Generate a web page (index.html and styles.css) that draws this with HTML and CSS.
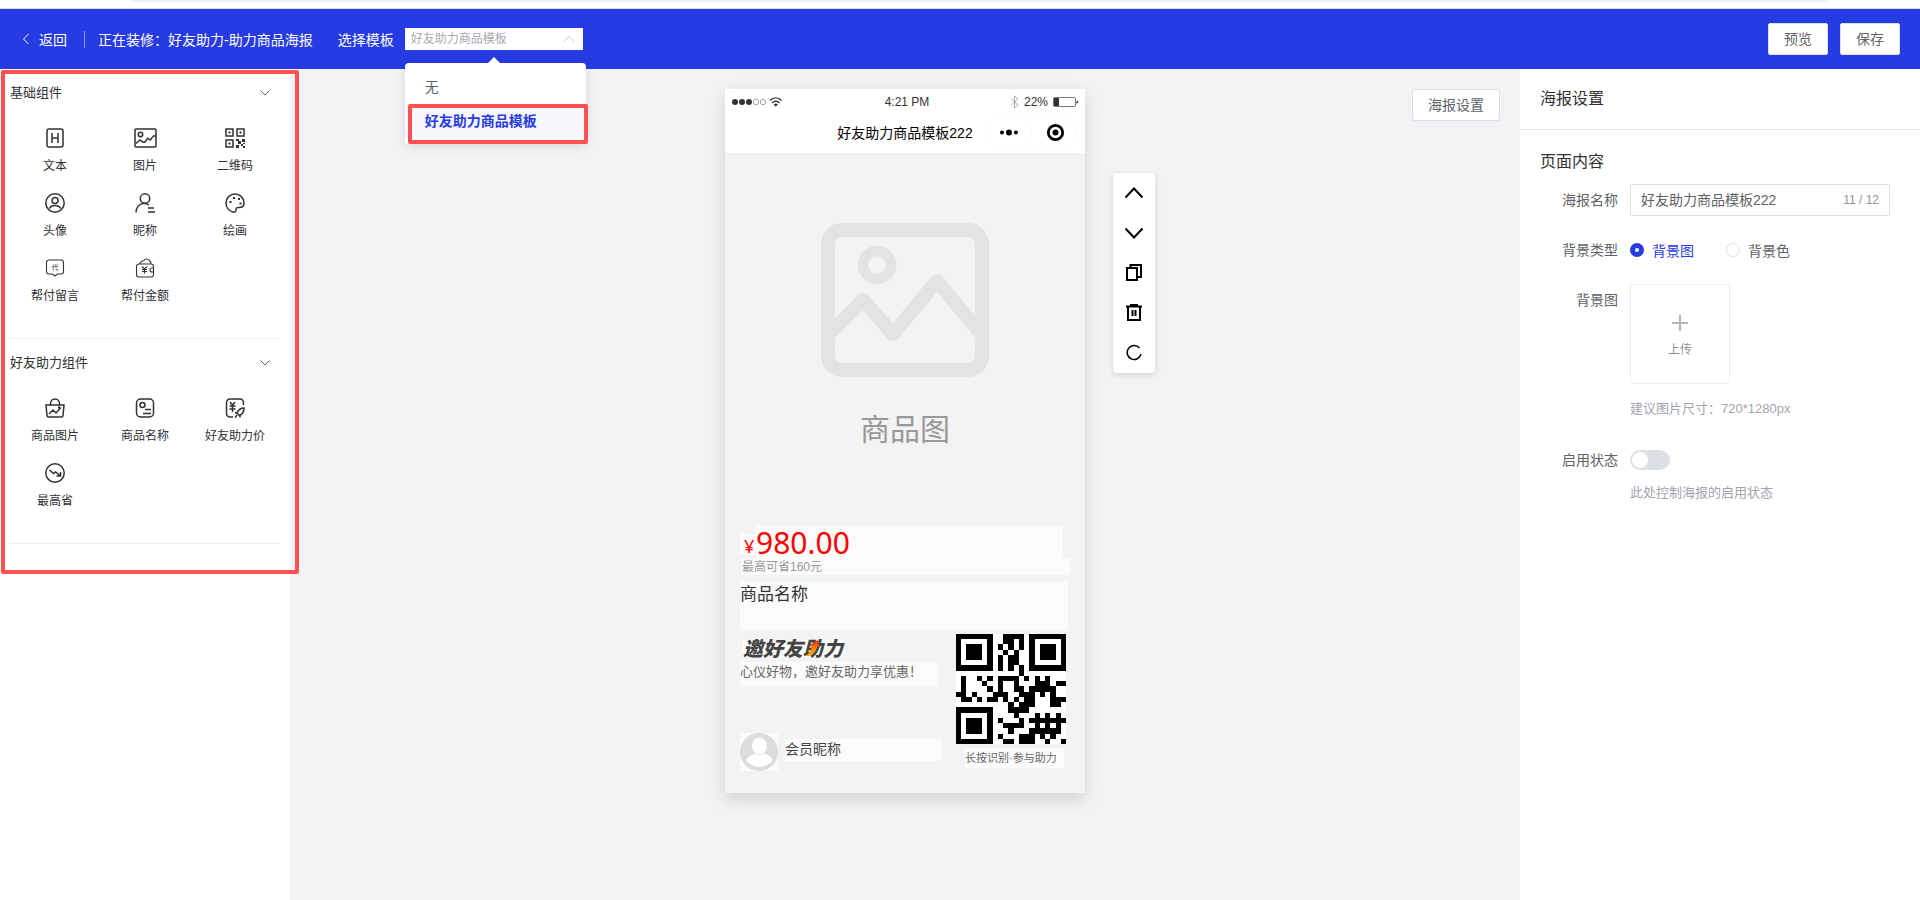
FILE: index.html
```html
<!DOCTYPE html>
<html lang="zh-CN">
<head>
  <meta charset="UTF-8">
  <meta name="viewport" content="width=device-width, initial-scale=1.0">
  <title>好友助力-助力商品海报</title>
  <link rel="stylesheet" href="styles.css">
</head>
<body>
  <div class="browser-strip"><div class="address-pill"></div></div>

  <header class="topbar">
    <a class="back" href="#">
      <svg width="8" height="12" viewBox="0 0 8 12"><path d="M6.500 1L1.500 6l5 5"/></svg>
      返回
    </a>
    <span class="divider"></span>
    <span class="editing">正在装修：好友助力-助力商品海报</span>
    <label for="template">选择模板</label>
    <div class="select-wrap">
      <select id="template">
        <option>好友助力商品模板</option>
      </select>
      <svg class="select-arrow" width="12" height="8" viewBox="0 0 12 8"><path d="M1 6.500l5-5 5 5"/></svg>
      <ul class="dropdown">
        <li>无</li>
        <li class="selected">好友助力商品模板<span class="mark mark-option"></span></li>
      </ul>
    </div>
    <div class="topbar-actions">
      <button type="button" class="btn">预览</button>
      <button type="button" class="btn">保存</button>
    </div>
  </header>

  <div class="layout">
    <aside class="sidebar">
      <div class="groups">
        <section class="group">
          <h2>基础组件 <svg width="10" height="6" viewBox="0 0 10 6"><path d="M.5.5L5 5 9.500.5"/></svg></h2>
          <ul class="widgets">
            <li>
              <svg viewBox="0 0 20 20"><rect x="2" y="1" width="16" height="18" rx="2"/><path d="M7 5v10M13 5v10M7 10h6"/></svg>
              文本
            </li>
            <li>
              <svg class="wide" viewBox="0 0 23 20"><rect x="1" y="1" width="21" height="18" rx="1"/><circle cx="6.500" cy="6.500" r="2.200"/><path d="M2 15.500l4-3.500 3 2c2 1 3-1 4-3s2 1 3 1 2-3 3.500-4L22 8"/></svg>
              图片
            </li>
            <li>
              <svg viewBox="0 0 20 20"><path d="M1 1h7v7H1zM12 1h7v7h-7zM1 12h7v7H1z"/><path class="solid" d="M3.500 3.500h2v2h-2zM14.500 3.500h2v2h-2zM3.500 14.500h2v2h-2zM11 11h3v2h-3zM13 13h3v3h-3zM17 11h3v3h-3zM11 17h3v3h-3zM16 16h2v2h-2zM18 18h2v2h-2zM18 15h2v1h-2z"/></svg>
              二维码
            </li>
            <li>
              <svg viewBox="0 0 20 20"><circle cx="10" cy="10" r="9.200"/><circle cx="10" cy="7.500" r="3"/><path d="M4.500 15.500c1-2.500 3-3 5.500-3s4.500.5 5.500 3"/></svg>
              头像
            </li>
            <li>
              <svg viewBox="0 0 20 20"><circle cx="10" cy="5.500" r="4.700"/><path d="M1 19.500c0-5 3-9 8-9 2 0 3.500.5 5 1.500M13 15h6M13 19h7"/></svg>
              昵称
            </li>
            <li>
              <svg viewBox="0 0 20 20"><path d="M8 19C3.500 18 1 14 1 10a9 9 0 0 1 18 0c0 3-2 4.500-5 4.500-3 0-3 .5-3 2.500 0 1.500-1 2.500-3 2z"/><path class="solid" d="M4.500 8h2v2h-2zM8 4h2v2H8zM13 5h2v2h-2zM14.500 9.500h2v2h-2z"/></svg>
              绘画
            </li>
            <li>
              <svg class="thin" viewBox="0 0 20 20"><path d="M4 2h12a2.500 2.500 0 0 1 2.500 2.500v9A2.500 2.500 0 0 1 16 16h-3.500L10 18l-2.500-2H4a2.500 2.500 0 0 1-2.500-2.500v-9A2.500 2.500 0 0 1 4 2z"/><text x="6.500" y="12">代</text></svg>
              帮付留言
            </li>
            <li>
              <svg class="thin" viewBox="0 0 20 20"><path d="M4 6h12a2.500 2.500 0 0 1 2.500 2.500v8A2.500 2.500 0 0 1 16 19H4a2.500 2.500 0 0 1-2.500-2.500v-8A2.500 2.500 0 0 1 4 6zM4.500 6c1-3 3-3 4.500-3.500 1-2 4-2 5.500 0 1 1 1.500 2 1.500 3.500M18.500 10H17a2 2 0 0 0 0 4h1.500"/><path d="M7 8.500L9.500 11 12 8.500M9.500 11v4.500M7 11.500h5M7 13.500h5"/></svg>
              帮付金额
            </li>
          </ul>
        </section>

        <section class="group">
          <h2>好友助力组件 <svg width="10" height="6" viewBox="0 0 10 6"><path d="M.5.5L5 5 9.500.5"/></svg></h2>
          <ul class="widgets">
            <li>
              <svg viewBox="0 0 20 20"><path d="M1 7h18l-1 10.500a1.500 1.500 0 0 1-1.500 1.500h-13A1.500 1.500 0 0 1 2 17.500zM5.500 6.500v-1a4.500 4.500 0 0 1 9 0v1M4 16l4-4 3 3 5-5.500"/><path class="solid" d="M13 8.500h2v2h-2z"/></svg>
              商品图片
            </li>
            <li>
              <svg viewBox="0 0 20 20"><rect x="1.500" y="1" width="17" height="18" rx="4"/><circle cx="7.500" cy="7" r="2.500"/><path d="M10 11.500h6M8 15.500h8"/></svg>
              商品名称
            </li>
            <li>
              <svg viewBox="0 0 20 20"><path d="M8 19H5a3.500 3.500 0 0 1-3.500-3.500v-11A3.500 3.500 0 0 1 5 1h10a3.500 3.500 0 0 1 3.500 3.500V7M5 4l2.500 3L10 4M7.500 7v7M4.500 8h6M4.500 11h6"/><path d="M19 10c-3 0-5.500 1.500-7 5l2.500 2.500C18 16 19 13 19 10zM12 14.500l-2 .5M15 17.500v2M12 17l-2 2.500"/></svg>
              好友助力价
            </li>
            <li>
              <svg viewBox="0 0 20 20"><circle cx="10" cy="10" r="9.200"/><path d="M4.500 7l4 3.500 2-1.500 4.500 3.500M15.500 9v4h-4"/></svg>
              最高省
            </li>
          </ul>
        </section>
        <span class="mark mark-groups"></span>
      </div>
    </aside>

    <main class="canvas">
      <div class="phone">
        <div class="status-bar">
          <svg width="50" height="12" viewBox="0 0 50 12">
            <g fill="#333"><circle cx="3" cy="6" r="3"/><circle cx="10" cy="6" r="3"/><circle cx="17" cy="6" r="3"/></g>
            <g fill="none" stroke="#666" stroke-width=".6"><circle cx="24" cy="6" r="2.700"/><circle cx="31" cy="6" r="2.700"/></g>
            <g fill="none" stroke="#333" stroke-width="1.400"><path d="M38 4.500c3.500-3.500 8-3.500 11.500 0M40 7c2.500-2.200 5-2.200 7.500 0"/></g>
            <path fill="#333" d="M41.700 8.500c1.500-1.200 2.700-1.200 4.200 0L43.800 10.800z"/>
          </svg>
          <span>4:21 PM</span>
          <span class="battery">
            <svg width="8" height="14" viewBox="0 0 8 14"><path d="M.5 4l6.500 6-3.500 3V1L7 4 .5 10" fill="none" stroke="#999" stroke-width=".8"/></svg>
            <span>22%</span>
            <svg width="25" height="10" viewBox="0 0 25 10"><rect x=".5" y=".5" width="22" height="9" rx="1" fill="none" stroke="#555" stroke-width=".8"/><path fill="#333" d="M1 1h5v8H1zM23.500 3.500l1.500.5v2l-1.500.5z"/></svg>
          </span>
        </div>
        <div class="nav-bar">
          <span class="nav-title">好友助力商品模板222</span>
          <svg class="capsule" width="91" height="31" viewBox="0 0 91 31">
            <rect x=".5" y=".5" width="90" height="30" rx="15" fill="none" stroke="#fafafa"/>
            <path d="M45.500 7v17" stroke="#f8f8f8"/>
            <circle cx="16" cy="15.500" r="2"/><circle cx="23" cy="15.500" r="3"/><circle cx="30" cy="15.500" r="2"/>
            <circle cx="69.500" cy="15.500" r="7.200" fill="none" stroke="#000" stroke-width="2.800"/><circle cx="69.500" cy="15.500" r="3"/>
          </svg>
        </div>

        <div class="poster">
          <div class="item product">
            <svg width="168" height="154" viewBox="0 0 168 154" fill="none" stroke="#e3e3e3" stroke-width="14">
              <rect x="7" y="7" width="154" height="140" rx="14"/>
              <circle cx="56" cy="42" r="14" stroke-width="10.500"/>
              <path stroke-width="14" stroke-linejoin="round" d="M9 110L42 77l30 34 44-53 45 54"/>
            </svg>
            <span>商品图</span>
          </div>
          <div class="item yen">¥</div>
          <div class="item price">980.00</div>
          <div class="item saving">最高可省160元</div>
          <div class="item name">商品名称</div>
          <div class="item slogan">邀好友助力
            <svg width="16" height="17" viewBox="0 0 16 17"><defs><linearGradient id="flame" x1="0" y1="1" x2="0" y2="0"><stop offset="0" stop-color="#ffb000"/><stop offset=".6" stop-color="#ff7000"/><stop offset="1" stop-color="#f8200c"/></linearGradient></defs><path fill="url(#flame)" d="M0 16c4-2 6-5 7-10H4L13 0l1 7-2-1C11 12 7 17 0 16z"/></svg>
          </div>
          <div class="item tagline">心仪好物，邀好友助力享优惠！</div>
          <div class="item avatar">
            <svg width="38" height="38" viewBox="0 0 38 38"><circle cx="19" cy="19" r="19" fill="#dcdcdc"/><ellipse cx="19.500" cy="13" rx="7.500" ry="8.500" fill="#fff"/><path fill="#fff" d="M6 27c3-4 7-6 9-6.500 3 2 6 2 9 0 3 .5 7 3 9 6.500-3 4-8 7-13.500 7S9 31 6 27z"/></svg>
          </div>
          <div class="item nickname">会员昵称</div>
          <div class="item qrcode">
            <svg width="110" height="110" viewBox="0 0 21 21" shape-rendering="crispEdges">
              <path fill="#fff" d="M0 0h21v21H0z"/>
              <path fill-rule="evenodd" d="M0 0h7v7H0zM1 1v5h5V1zM2 2h3v3H2zM14 0h7v7h-7zM15 1v5h5V1zM16 2h3v3h-3zM0 14h7v7H0zM1 15v5h5v-5zM2 16h3v3H2z"/>
              <path d="M9 0h4v1H9zM9 1h2v1H9zM12 1h1v1h-1zM8 2h1v1H8zM10 2h1v1h-1zM12 2h1v1h-1zM9 3h1v1H9zM11 3h1v1h-1zM8 4h1v3H8zM10 4h2v1h-2zM11 5h1v1h-1zM10 5h1v2h-1zM12 6h1v2h-1z
                M1 8h1v5H1zM0 11h1v1H0zM2 12h1v1H2zM4 8h1v1H4zM5 9h1v1H5zM6 8h1v1H6zM6 10h1v1H6zM3 11h1v1H3zM4 12h1v1H4zM6 12h2v1H6zM7 11h2v1H7zM8 8h4v1H8zM8 9h1v2H8zM11 9h1v2h-1zM9 11h1v1H9zM9 12h1v1H9zM12 10h1v1h-1zM13 8h1v1h-1z
                M15 8h1v1h-1zM17 8h1v1h-1zM15 9h3v1h-3zM19 9h2v1h-2zM14 10h5v1h-5zM12 11h3v1h-3zM16 11h1v1h-1zM18 11h1v1h-1zM13 12h2v1h-2zM18 12h3v1h-3zM10 13h1v1h-1zM12 13h3v1h-3zM18 13h2v1h-2zM10 14h4v1h-4zM11 12h1v1h-1zM11 15h1v1h-1z
                M15 15h1v1h-1zM17 15h1v1h-1zM19 15h1v1h-1zM8 16h1v1H8zM12 16h1v1h-1zM14 16h7v1h-7zM9 17h2v1H9zM12 17h1v1h-1zM15 17h1v1h-1zM17 17h1v1h-1zM19 17h1v1h-1zM9 17h3v1H9zM14 18h6v1h-6zM10 18h1v1h-1zM8 19h1v1H8zM12 19h3v1h-3zM16 19h1v1h-1zM18 19h1v1h-1zM9 20h2v1H9zM12 20h3v1h-3zM17 20h1v1h-1zM20 20h1v1h-1z"/>
            </svg>
          </div>
          <div class="item qr-text">长按识别·参与助力</div>
        </div>
      </div>

      <div class="canvas-tools">
        <div class="toolbar">
          <button type="button" aria-label="上移"><svg viewBox="0 0 20 20"><path d="M1.500 14.500l8.500-9 8.500 9"/></svg></button>
          <button type="button" aria-label="下移"><svg viewBox="0 0 20 20"><path d="M1.500 5.500l8.500 9 8.500-9"/></svg></button>
          <button type="button" aria-label="复制"><svg viewBox="0 0 20 20"><path d="M3 5h10v12H3zM6.500 5V2H17v12h-4"/></svg></button>
          <button type="button" aria-label="删除"><svg viewBox="0 0 20 20"><path d="M2 3.500h16M6 2h8M4 3.500V17h12V3.500M8.500 7v6M11.500 7v6"/></svg></button>
          <button type="button" aria-label="重置"><svg class="thin" viewBox="0 0 20 20"><path d="M15.500 5A7 7 0 1 0 17 11"/></svg></button>
        </div>
        <button type="button" class="btn">海报设置</button>
      </div>
    </main>

    <aside class="settings">
      <h2>海报设置</h2>
      <form>
        <h3>页面内容</h3>
        <div class="field">
          <label class="field-label" for="poster-name">海报名称</label>
          <div class="text-box">
            <input id="poster-name" type="text" value="好友助力商品模板222" maxlength="12">
            <span>11 / 12</span>
          </div>
        </div>
        <div class="field">
          <span class="field-label">背景类型</span>
          <div class="radios">
            <label><input type="radio" name="bg" checked> 背景图</label>
            <label><input type="radio" name="bg"> 背景色</label>
          </div>
        </div>
        <div class="field">
          <span class="field-label">背景图</span>
          <div>
            <button type="button" class="upload">
              <svg width="16" height="16" viewBox="0 0 16 16"><path d="M8 0v16M0 8h16"/></svg>
              上传
            </button>
            <p class="hint upload-hint">建议图片尺寸：720*1280px</p>
          </div>
        </div>
        <div class="field">
          <label class="field-label" for="enabled">启用状态</label>
          <div>
            <div class="switch-row"><input id="enabled" class="switch" type="checkbox"></div>
            <p class="hint">此处控制海报的启用状态</p>
          </div>
        </div>
      </form>
    </aside>
  </div>
</body>
</html>
```
FILE: styles.css
```css
* {
  box-sizing: border-box;
}

body {
  margin: 0;
  min-height: 100vh;
  display: flex;
  flex-direction: column;
  font-family: "Liberation Sans", "Noto Sans CJK SC", sans-serif;
  font-size: 14px;
  color: #606266;
  background: #fff;
}

h2, h3, ul, p {
  margin: 0;
  padding: 0;
  font-weight: 400;
  list-style: none;
}

button, input, select {
  font: inherit;
  color: inherit;
}

svg {
  display: block;
  flex: none;
}

/* browser edge above the app */
.browser-strip {
  height: 9px;
  padding: 0 92px 0 130px;
  border-bottom: 1px solid #dcdce0;
}

.address-pill {
  height: 2px;
  background: #edf1fb;
  border-radius: 0 0 4px 4px;
}

/* top bar */
.topbar {
  height: 60px;
  display: flex;
  align-items: center;
  padding: 0 20px 0 22px;
  background: #273be2;
  color: #fff;
}

.back {
  display: flex;
  align-items: center;
  gap: 9px;
  color: #fff;
  text-decoration: none;
}

.back svg {
  fill: none;
  stroke: #fff;
}

.divider {
  width: 1px;
  height: 17px;
  margin: 0 13px 0 17px;
  background: #8c97f0;
}

.editing {
  margin-right: 25px;
}

.select-wrap {
  position: relative;
  width: 178px;
  margin-left: 11px;
}

.select-wrap select {
  display: block;
  width: 100%;
  height: 22px;
  padding: 0 6px;
  border: 0;
  background: #fff;
  color: #a8abb2;
  font-size: 12px;
  appearance: none;
}

.select-arrow {
  position: absolute;
  top: 7px;
  right: 8px;
  fill: none;
  stroke: #c0c4cc;
}

.dropdown {
  position: absolute;
  z-index: 2;
  top: 35px;
  left: 0;
  width: 181px;
  padding: 7px 0 6px;
  border-radius: 4px;
  background: #fff;
  color: #606266;
  box-shadow: 0 2px 12px rgba(0, 0, 0, .12);
}

.dropdown::before {
  content: "";
  position: absolute;
  top: -6px;
  left: 83px;
  border: 6px solid transparent;
  border-top: 0;
  border-bottom-color: #fff;
}

.dropdown li {
  position: relative;
  height: 34px;
  line-height: 34px;
  padding: 0 20px;
  white-space: nowrap;
}

.dropdown .selected {
  background: #f5f7fa;
  color: #273be2;
  font-weight: 700;
}

.topbar-actions {
  display: flex;
  gap: 12px;
  margin-left: auto;
}

.btn {
  height: 32px;
  padding: 0 15px 2px;
  border: 1px solid #dcdfe6;
  border-radius: 2px;
  background: #fff;
  color: #606266;
}

/* red highlight frames */
.mark {
  position: absolute;
  border: 4px solid #ff5151;
  border-radius: 2px;
  pointer-events: none;
}

.mark-option {
  inset: 0 -2px -6px 3px;
}

.mark-groups {
  inset: 1px -9px -30px 1px;
}

.layout {
  flex: 1;
  display: flex;
}

/* component list */
.sidebar {
  flex: none;
  width: 290px;
  background: #fff;
}

.groups {
  position: relative;
}

.group {
  margin: 0 10px;
  padding-bottom: 26px;
  border-bottom: 1px solid #ebeef5;
}

.group h2 {
  display: flex;
  align-items: center;
  justify-content: space-between;
  height: 48px;
  padding: 0 10px 3px 0;
  font-size: 13px;
  color: #303133;
}

.group h2 svg {
  margin-top: 3px;
  fill: none;
  stroke: #606266;
}

.widgets {
  display: grid;
  grid-template-columns: repeat(3, 1fr);
}

.widgets li {
  display: flex;
  flex-direction: column;
  align-items: center;
  gap: 9px;
  height: 65px;
  padding-top: 11px;
  font-size: 12px;
  line-height: 18px;
  color: #303133;
}

.widgets svg {
  width: 20px;
  height: 20px;
  fill: none;
  stroke: #303133;
  stroke-width: 1.500;
}

.widgets .wide {
  width: 23px;
}

.widgets .thin {
  stroke-width: 1.100;
}

.widgets .solid {
  fill: #303133;
  stroke: none;
}

.widgets text {
  fill: #303133;
  stroke: none;
  font-size: 7px;
}

/* canvas */
.canvas {
  flex: 1;
  display: grid;
  grid-template-columns: 1fr 360px 1fr;
  align-items: start;
  padding-top: 20px;
  background: #f1f3f5;
}

.phone {
  grid-column: 2;
  background: #fff;
  box-shadow: 0 6px 16px rgba(0, 0, 0, .14);
}

.status-bar {
  display: grid;
  grid-template-columns: 1fr auto 1fr;
  align-items: center;
  height: 25px;
  padding: 0 7px 0 11px;
  font-size: 12px;
  color: #333;
}

.status-bar > svg {
  margin-left: -4px;
}

.battery {
  display: flex;
  align-items: center;
  justify-content: flex-end;
  gap: 5px;
}

.nav-bar {
  display: grid;
  grid-template-columns: 1fr auto 1fr;
  align-items: center;
  height: 39px;
  padding: 0 8px 2px;
  color: #000;
}

.nav-title {
  grid-column: 2;
  padding-bottom: 2px;
}

.capsule {
  justify-self: end;
}

.poster {
  position: relative;
  height: 640px;
  background: #f1f3f5;
}

.item {
  position: absolute;
  background: #fbfbfb;
  white-space: nowrap;
}

.product {
  top: 0;
  left: 0;
  width: 360px;
  height: 360px;
  display: flex;
  flex-direction: column;
  align-items: center;
  gap: 33px;
  padding-top: 70px;
  background: #f3f3f3;
  color: #999;
  font-size: 30px;
  line-height: 40px;
}

.yen {
  top: 381px;
  left: 15px;
  width: 21px;
  height: 21px;
  padding-left: 4px;
  color: #f00;
  font-family: "Noto Sans", sans-serif;
  font-size: 18px;
  line-height: 24px;
}

.price {
  top: 373px;
  left: 31px;
  width: 307px;
  height: 35px;
  padding-top: 3px;
  color: #f00;
  font-family: "Noto Sans", sans-serif;
  font-size: 30px;
  line-height: 28px;
}

.saving {
  top: 405px;
  left: 17px;
  width: 328px;
  height: 17px;
  color: #999;
  font-size: 12px;
  line-height: 18px;
}

.name {
  top: 429px;
  left: 15px;
  width: 328px;
  height: 48px;
  color: #333;
  font-size: 17px;
  line-height: 26px;
}

.slogan {
  top: 487px;
  left: 18px;
  width: 100px;
  height: 17px;
  color: #444;
  font-size: 20px;
  font-style: italic;
  font-weight: 900;
  line-height: 18px;
}

.slogan svg {
  position: absolute;
  top: 0;
  left: 62px;
}

.tagline {
  top: 509px;
  left: 15px;
  width: 198px;
  height: 24px;
  color: #666;
  font-size: 13px;
  line-height: 20px;
}

.avatar {
  top: 580px;
  left: 15px;
}

.nickname {
  top: 586px;
  left: 60px;
  width: 156px;
  height: 22px;
  color: #444;
  line-height: 20px;
}

.qrcode {
  top: 481px;
  left: 231px;
}

.qr-text {
  top: 595px;
  left: 240px;
  width: 99px;
  height: 20px;
  color: #666;
  font-size: 11px;
  line-height: 20px;
}

.canvas-tools {
  display: flex;
  align-items: flex-start;
  justify-content: space-between;
  padding: 0 20px 0 28px;
}

.toolbar {
  display: flex;
  flex-direction: column;
  margin-top: 84px;
  border-radius: 4px;
  background: #fff;
  box-shadow: 0 2px 6px rgba(0, 0, 0, .14);
}

.toolbar button {
  width: 42px;
  height: 40px;
  padding: 0 11px;
  border: 0;
  background: none;
}

.toolbar svg {
  width: 20px;
  height: 20px;
  fill: none;
  stroke: #000;
  stroke-width: 2;
}

.toolbar .thin {
  stroke-width: 1.500;
}

/* settings */
.settings {
  flex: none;
  width: 400px;
  background: #fff;
}

.settings h2 {
  height: 61px;
  padding-left: 20px;
  border-bottom: 1px solid #dfe2e8;
  font-size: 16px;
  line-height: 60px;
  color: #303133;
}

.settings form {
  display: flex;
  flex-direction: column;
  gap: 18px;
  padding: 20px 30px 20px 20px;
}

.settings h3 {
  margin-bottom: -8px;
  font-size: 16px;
  line-height: 24px;
  color: #303133;
}

.field {
  display: grid;
  grid-template-columns: 78px 1fr;
  column-gap: 12px;
}

.field-label {
  line-height: 32px;
  text-align: right;
}

.text-box {
  display: flex;
  align-items: center;
  height: 32px;
  padding: 0 10px;
  border: 1px solid #dcdfe6;
}

.text-box input {
  flex: 1;
  min-width: 0;
  padding: 0 0 2px;
  border: 0;
  outline: 0;
  background: none;
}

.text-box span {
  font-size: 12px;
  color: #909399;
}

.radios {
  display: flex;
  gap: 32px;
}

.radios label {
  display: flex;
  align-items: center;
  gap: 8px;
}

.radios input {
  width: 14px;
  height: 14px;
  margin: 0;
  border: 1px solid #dcdfe6;
  border-radius: 50%;
  appearance: none;
}

.radios input:checked {
  border: 5px solid #273be2;
}

.radios label:has(:checked) {
  color: #273be2;
}

.upload {
  display: flex;
  flex-direction: column;
  align-items: center;
  justify-content: center;
  gap: 9px;
  width: 100px;
  height: 100px;
  padding: 4px 0 0;
  border: 1px solid #ebeef5;
  border-radius: 4px;
  background: #fff;
  color: #909399;
  font-size: 12px;
}

.upload svg {
  stroke: #b4b6bc;
  stroke-width: 2;
}

.hint {
  font-size: 13px;
  line-height: 34px;
  color: #a0a4ae;
}

.upload-hint {
  margin-top: 8px;
}

.switch-row {
  display: flex;
  align-items: center;
  height: 32px;
}

.switch {
  width: 40px;
  height: 20px;
  margin: 0;
  padding: 2px;
  border-radius: 10px;
  background: #dcdfe6;
  appearance: none;
}

.switch::before {
  content: "";
  display: block;
  width: 16px;
  height: 16px;
  border-radius: 50%;
  background: #fff;
}

.switch:checked {
  background: #273be2;
}

.switch:checked::before {
  margin-left: auto;
}
```
